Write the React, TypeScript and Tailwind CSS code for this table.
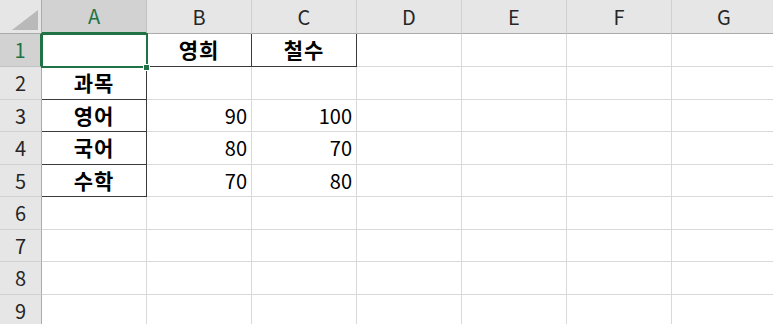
import React from "react";

const COLS = ["A", "B", "C", "D", "E", "F", "G"];
const ROW_HEIGHTS = [33, 33, 32, 33, 32, 33, 32, 33, 32];

type Cell = { text?: string; bold?: boolean; align?: "center" | "right" };

const data: Record<string, Cell> = {
  B1: { text: "영희", bold: true, align: "center" },
  C1: { text: "철수", bold: true, align: "center" },
  A2: { text: "과목", bold: true, align: "center" },
  A3: { text: "영어", bold: true, align: "center" },
  A4: { text: "국어", bold: true, align: "center" },
  A5: { text: "수학", bold: true, align: "center" },
  B3: { text: "90", align: "right" },
  C3: { text: "100", align: "right" },
  B4: { text: "80", align: "right" },
  C4: { text: "70", align: "right" },
  B5: { text: "70", align: "right" },
  C5: { text: "80", align: "right" },
};

// cells with a thin black border drawn on the right / bottom edge
const darkRight = new Set(["A1", "B1", "C1", "A2", "A3", "A4", "A5"]);
const darkBottom = new Set(["B1", "C1", "A1", "A2", "A3", "A4", "A5"]);

const font = { fontFamily: '"Noto Sans CJK KR", "Noto Sans", sans-serif' };

export default function App() {
  return (
    <div className="relative w-[773px] h-[324px] overflow-hidden bg-white" style={font}>
      {/* column headers */}
      <div className="flex h-[34px]">
        <div className="relative w-[42px] shrink-0 bg-[#e6e6e6] border-r border-b border-[#ababab]">
          <div
            className="absolute right-[3px] bottom-[3px] w-[26px] h-[20px] bg-[#b9b9b9]"
            style={{ clipPath: "polygon(100% 0, 100% 100%, 0 100%)" }}
          />
        </div>
        {COLS.map((c) =>
          c === "A" ? (
            <div
              key={c}
              className="w-[105px] shrink-0 flex items-center justify-center bg-[#d2d2d2] border-r border-[#c2c2c2] border-b-2 border-b-[#217346] text-[20px] text-[#217346]"
            >
              {c}
            </div>
          ) : (
            <div
              key={c}
              className="w-[105px] shrink-0 flex items-center justify-center bg-[#e6e6e6] border-r border-[#d0d0d0] border-b border-b-[#ababab] text-[20px] text-[#262626]"
            >
              {c}
            </div>
          )
        )}
      </div>

      {/* rows */}
      {ROW_HEIGHTS.map((h, i) => {
        const r = i + 1;
        const selected = r === 1;
        return (
          <div key={r} className="flex" style={{ height: h }}>
            <div
              className={
                selected
                  ? "w-[42px] shrink-0 flex items-center justify-center bg-[#d2d2d2] border-r-2 border-r-[#217346] border-b border-b-[#c2c2c2] text-[20px] text-[#217346]"
                  : "w-[42px] shrink-0 flex items-center justify-center bg-[#e6e6e6] border-r border-r-[#ababab] border-b border-b-[#d0d0d0] text-[20px] text-[#262626]"
              }
            >
              {r}
            </div>
            {COLS.map((c) => {
              const key = `${c}${r}`;
              const cell = data[key];
              return (
                <div
                  key={key}
                  className={
                    "w-[105px] shrink-0 flex items-center px-[4px] border-r border-b text-black " +
                    (darkRight.has(key) ? "border-r-[#3a3a3a] " : "border-r-[#d9d9d9] ") +
                    (darkBottom.has(key) ? "border-b-[#3a3a3a] " : "border-b-[#d9d9d9] ") +
                    (cell?.align === "right" ? "justify-end text-[20px] " : "justify-center ") +
                    (cell?.bold ? "font-bold text-[21px] tracking-[1px]" : "")
                  }
                >
                  {cell?.text}
                </div>
              );
            })}
          </div>
        );
      })}

      {/* active cell A1 */}
      <div className="absolute left-[41px] top-[33px] w-[107px] h-[35px] border-2 border-[#217346]" />
      <div className="absolute left-[144px] top-[65px] w-[5px] h-[5px] bg-[#217346] outline outline-1 outline-white" />
    </div>
  );
}
